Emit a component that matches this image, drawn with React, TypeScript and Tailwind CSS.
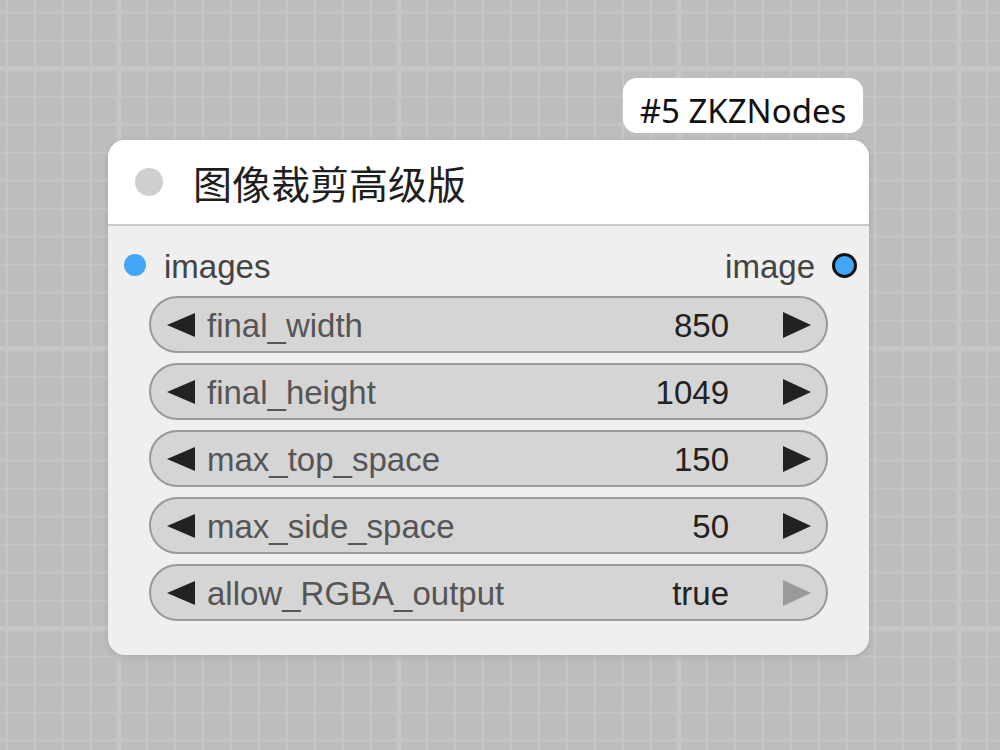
import React from "react";

const widgets = [
  { name: "final_width", value: "850", disabled: false },
  { name: "final_height", value: "1049", disabled: false },
  { name: "max_top_space", value: "150", disabled: false },
  { name: "max_side_space", value: "50", disabled: false },
  { name: "allow_RGBA_output", value: "true", disabled: true },
];

function Grid() {
  const lines: React.ReactNode[] = [];
  for (let k = -5; k <= 35; k++) {
    const x = 119 + 28 * k;
    const major = ((k % 10) + 10) % 10 === 0;
    lines.push(
      <line key={"v" + k} x1={x} y1={0} x2={x} y2={750} stroke="#c6c6c6" strokeWidth={major ? 5 : 2} />
    );
  }
  for (let k = -5; k <= 30; k++) {
    const y = 68.5 + 28 * k;
    const major = ((k % 10) + 10) % 10 === 0;
    lines.push(
      <line key={"h" + k} x1={0} y1={y} x2={1000} y2={y} stroke="#c6c6c6" strokeWidth={major ? 5 : 2} />
    );
  }
  return (
    <svg className="absolute inset-0" width={1000} height={750}>
      <rect width={1000} height={750} fill="#bdbdbd" />
      {lines}
    </svg>
  );
}

function LeftArrow() {
  return (
    <svg width="28" height="24" viewBox="0 0 28 24" className="shrink-0">
      <polygon points="0,12 28,0 28,24" fill="#222" />
    </svg>
  );
}

function RightArrow({ disabled }: { disabled: boolean }) {
  return (
    <svg width="28" height="26" viewBox="0 0 28 26" className="shrink-0">
      <polygon points="0,0 28,13 0,26" fill={disabled ? "#9a9a9a" : "#222"} />
    </svg>
  );
}

export default function App() {
  return (
    <div className="relative w-[1000px] h-[750px] overflow-hidden bg-[#bdbdbd]">
      <Grid />
      {/* badge */}
      <div className="absolute left-[623px] top-[78px] w-[240px] h-[55px] rounded-[14px] bg-white flex items-center justify-center">
        <span className="text-[33px] leading-none text-[#111] font-['Noto_Sans',sans-serif] mt-[9px]">
          #5 ZKZNodes
        </span>
      </div>
      {/* node */}
      <div className="absolute left-[108px] top-[140px] w-[761px] h-[515px] rounded-[17px] bg-[#efefef] overflow-hidden shadow-[0_2px_6px_rgba(0,0,0,0.12)] flex flex-col">
        <div className="h-[84px] bg-white flex items-center border-b-2 border-[#c9c9c9] box-content">
          <div className="ml-[27px] w-[28px] h-[28px] rounded-full bg-[#cfcfcf] shrink-0" />
          <span className="ml-[30px] text-[39px] leading-none text-[#1e1e1e] font-['Noto_Sans_CJK_SC','Noto_Sans',sans-serif]">
            图像裁剪高级版
          </span>
        </div>
        <div className="flex flex-col pt-[14px]">
          <div className="h-[50px] flex items-center justify-between pl-[16px] pr-[12px]">
            <div className="flex items-center gap-[18px]">
              <div className="w-[22px] h-[22px] rounded-full bg-[#42a5f5]" />
              <span className="text-[33px] leading-none text-[#444] font-['Liberation_Sans',Arial,sans-serif] mt-[2px]">images</span>
            </div>
            <div className="flex items-center gap-[17px]">
              <span className="text-[33px] leading-none text-[#444] font-['Liberation_Sans',Arial,sans-serif] mt-[2px]">image</span>
              <div className="w-[25px] h-[25px] rounded-full bg-[#42a5f5] border-[3px] border-[#111]" />
            </div>
          </div>
          <div className="mt-[6px] flex flex-col gap-[10px] px-[41px]">
            {widgets.map((w) => (
              <div
                key={w.name}
                className="h-[57px] rounded-full border-2 border-[#999] bg-[#d5d5d5] flex items-center pl-[16px] pr-[15px] font-['Liberation_Sans',Arial,sans-serif]"
              >
                <LeftArrow />
                <span className="ml-[12px] text-[33px] leading-none text-[#555] mt-[1px]">{w.name}</span>
                <span className="ml-auto text-[33px] leading-none text-[#222] mt-[1px]">{w.value}</span>
                <span className="ml-[54px] flex items-center">
                  <RightArrow disabled={w.disabled} />
                </span>
              </div>
            ))}
          </div>
        </div>
      </div>
    </div>
  );
}
